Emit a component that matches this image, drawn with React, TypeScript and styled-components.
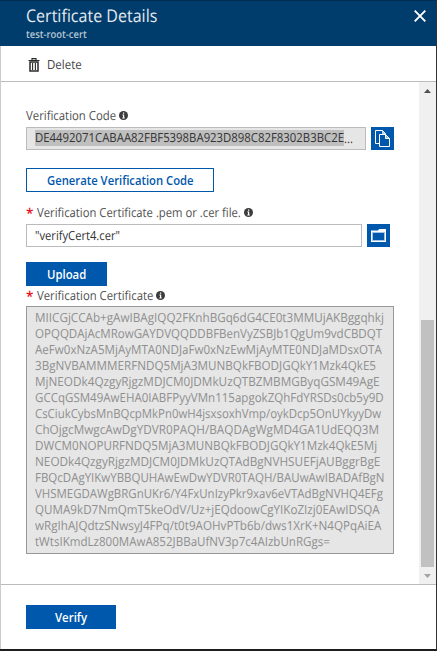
import React, { useLayoutEffect, useRef, useState } from "react";
import styled, { createGlobalStyle, css } from "styled-components";

const blue = "#0058ad";

const GlobalStyle = createGlobalStyle`
  *, *::before, *::after { box-sizing: border-box; }
  html, body { margin: 0; height: 100%; overflow: hidden; }
  body {
    font-family: "Open Sans", "Noto Sans", sans-serif;
    font-size: 12.5px;
    color: #444;
    background: #fff;
    text-rendering: geometricPrecision;
  }
`;

const Blade = styled.div`
  width: 437px;
  height: 651px;
  display: flex;
  flex-direction: column;
  border-right: 1px solid #333;
  border-bottom: 2px solid #1e1e20;
  background: #fff;
`;

const Header = styled.header`
  height: 46px;
  flex: none;
  display: flex;
  justify-content: space-between;
  align-items: flex-start;
  padding: 4px 9px 0 26px;
  border-top: 1px solid #002e53;
  background: #003c6c;
  color: #fff;
`;

const Heading = styled.div`
  display: flex;
  flex-direction: column;
`;

const Title = styled.h1`
  margin: 0;
  height: 23px;
  line-height: 23px;
  font-size: 17.5px;
  font-weight: 400;
  color: #e4eaf0;
`;

const Subtitle = styled.div`
  height: 14px;
  line-height: 14px;
  font-size: 10.5px;
  font-weight: 600;
  color: #b9c6d2;
`;

const CloseButton = styled.button`
  width: 14px;
  height: 14px;
  margin-top: 4px;
  padding: 0;
  border: 0;
  background: none;
  display: flex;
  align-items: center;
  justify-content: center;
`;

const Body = styled.div`
  flex: 1;
  min-height: 0;
  display: flex;
  flex-direction: column;
  border-left: 1px solid #ccc;
`;

const Toolbar = styled.div`
  height: 36px;
  flex: none;
  display: flex;
  align-items: center;
  gap: 7px;
  padding: 2px 0 0 27px;
  border-bottom: 1px solid #bbb;
`;

const ScrollArea = styled.div`
  flex: 1;
  min-height: 0;
  display: flex;
`;

const Form = styled.main`
  flex: 1;
  display: flex;
  flex-direction: column;
  align-items: flex-start;
  padding: 23px 0 0 25px;
`;

const Label = styled.div<{ $top?: number; $bottom: number }>`
  display: flex;
  align-items: center;
  height: 18px;
  margin: ${(p) => p.$top ?? 0}px 0 ${(p) => p.$bottom}px;
  color: #505050;
`;

const Star = styled.span`
  width: 11px;
  height: 18px;
  line-height: 20px;
  font-size: 13.5px;
  font-weight: 600;
  color: #e81123;
`;

const InfoSlot = styled.span`
  display: flex;
  margin-left: 3px;
`;

const FieldRow = styled.div`
  display: flex;
  gap: 5px;
  height: 23px;
`;

const Field = styled.div<{ $width: number; $readOnly?: boolean }>`
  width: ${(p) => p.$width}px;
  height: 23px;
  display: flex;
  align-items: center;
  padding-left: 8px;
  border: 1px solid #bbb;
  color: #333;
  background: ${(p) => (p.$readOnly ? "#e6e6e6" : "#fff")};
`;

const Selected = styled.span`
  height: 16px;
  line-height: 16px;
  margin-bottom: 1px;
  background: #bfbfbf;
`;

const IconButton = styled.button`
  width: 23px;
  height: 23px;
  padding: 0;
  border: 0;
  display: flex;
  align-items: center;
  justify-content: center;
  background: ${blue};
`;

const Button = styled.button<{ $width: number; $top?: number; $outline?: boolean }>`
  width: ${(p) => p.$width}px;
  height: 24px;
  margin-top: ${(p) => p.$top ?? 0}px;
  padding: 0;
  display: flex;
  align-items: center;
  justify-content: center;
  font: inherit;
  border: 1px solid ${blue};
  ${(p) =>
    p.$outline
      ? css`
          background: #fff;
          color: ${blue};
          font-weight: 600;
        `
      : css`
          background: ${blue};
          color: #fff;
          font-weight: 600;
        `}
`;

const CertificateBox = styled.div`
  width: 368px;
  height: 248px;
  padding: 3px 0 0 8px;
  border: 1px solid #999;
  background: #e6e6e6;
  color: #8e8e8e;
`;

const CertificateLine = styled.div`
  height: 16px;
  line-height: 16px;
`;

const Scrollbar = styled.div`
  width: 17px;
  display: flex;
  flex-direction: column;
  align-items: center;
  background: #f0f0f0;
`;

const ScrollArrow = styled.div`
  height: 17px;
  flex: none;
  display: flex;
  align-items: center;
`;

const ScrollTrack = styled.div`
  flex: 1;
  display: flex;
  align-items: flex-end;
`;

const ScrollThumb = styled.div`
  width: 13px;
  height: 247px;
  background: #c1c1c1;
`;

const Footer = styled.footer`
  height: 65px;
  flex: none;
  padding: 20px 0 0 25px;
  border-top: 1px solid #bbb;
`;

const FitBox = styled.span<{ $width: number }>`
  display: inline-block;
  width: ${(p) => p.$width}px;
  white-space: pre;
`;

const FitText = styled.span`
  display: inline-block;
  transform-origin: 0 50%;
`;

/* Condenses its text so that the run takes up exactly the given width. */
function Fit({ children, width }: { children: string; width: number }) {
  const ref = useRef<HTMLSpanElement>(null);
  const [scale, setScale] = useState(1);
  useLayoutEffect(() => {
    if (ref.current) setScale(width / ref.current.offsetWidth);
  }, [children, width]);
  return (
    <FitBox $width={width}>
      <FitText ref={ref} style={{ transform: `scaleX(${scale})` }}>
        {children}
      </FitText>
    </FitBox>
  );
}

const InfoIcon = () => (
  <InfoSlot>
    <svg width="9" height="9" viewBox="0 0 9 9">
      <circle cx="4.5" cy="4.5" r="4.5" fill="#3c3c3c" />
      <path d="M4 1.5h1.2v1.2H4zM3.4 3.6h1.8v3h.6v.8H3.3v-.8H4V4.4h-.6z" fill="#fff" />
    </svg>
  </InfoSlot>
);

const TrashIcon = () => (
  <svg width="12" height="14" viewBox="0 0 12 14" fill="none" stroke="#2b2b2b">
    <path d="M.5 2.5h11M4 2V.7h4V2" strokeWidth="1.2" />
    <path d="M2 4v9h8V4z" strokeWidth="1.5" />
    <path d="M4.6 5v7M7.4 5v7" strokeWidth="1.1" />
  </svg>
);

const CloseIcon = () => (
  <svg width="12" height="12" viewBox="0 0 12 12">
    <path d="M.7.7l10.6 10.6M11.3.7L.7 11.3" stroke="#fff" strokeWidth="1.9" />
  </svg>
);

const CopyIcon = () => (
  <svg width="17" height="17" viewBox="0 0 17 17" fill="none">
    <path d="M5.5 13.5h-4v-13h7l3 3" stroke="#fff" />
    <path d="M8.5 .5v3h3z" fill="#9fc3e4" stroke="#fff" strokeWidth=".7" />
    <path d="M5.5 4.5h6l4 4v8h-10z" fill={blue} stroke="#fff" />
    <path d="M11.5 4.5v4h4z" fill="#9fc3e4" stroke="#fff" />
  </svg>
);

const FolderIcon = () => (
  <svg width="15" height="13" viewBox="0 0 15 13">
    <path d="M0 1.5h7L8.2 0H15v13H0z" fill="#fff" />
    <path d="M1.5 3.5h12v8h-12z" fill={blue} stroke="#9fc3e4" />
  </svg>
);

const Arrow = ({ down }: { down?: boolean }) => (
  <svg width="7" height="4" viewBox="0 0 7 4">
    <path d={down ? "M0 0h7L3.5 4z" : "M0 4h7L3.5 0z"} fill={down ? "#a3a3a3" : "#505050"} />
  </svg>
);

const certificate: [string, number][] = [
  ["MIICGjCCAb+gAwIBAgIQQ2FKnhBGq6dG4CE0t3MMUjAKBggqhkj", 348.5],
  ["OPQQDAjAcMRowGAYDVQQDDBFBenVyZSBJb1QgUm9vdCBDQT", 347],
  ["AeFw0xNzA5MjAyMTA0NDJaFw0xNzEwMjAyMTE0NDJaMDsxOTA", 346.5],
  ["3BgNVBAMMMERFNDQ5MjA3MUNBQkFBODJGQkY1Mzk4QkE5", 341],
  ["MjNEODk4QzgyRjgzMDJCM0JDMkUzQTBZMBMGByqGSM49AgE", 344.5],
  ["GCCqGSM49AwEHA0IABFPyyVMn115apgokZQhFdYRSDs0cb5y9D", 349],
  ["CsCiukCybsMnBQcpMkPn0wH4jsxsoxhVmp/oykDcp5OnUYkyyDw", 346.5],
  ["ChOjgcMwgcAwDgYDVR0PAQH/BAQDAgWgMD4GA1UdEQQ3M", 344.5],
  ["DWCM0NOPURFNDQ5MjA3MUNBQkFBODJGQkY1Mzk4QkE5Mj", 342.5],
  ["NEODk4QzgyRjgzMDJCM0JDMkUzQTAdBgNVHSUEFjAUBggrBgE", 345],
  ["FBQcDAgYIKwYBBQUHAwEwDwYDVR0TAQH/BAUwAwIBADAfBgN", 349.5],
  ["VHSMEGDAWgBRGnUKr6/Y4FxUnIzyPkr9xav6eVTAdBgNVHQ4EFg", 348],
  ["QUMA9kD7NmQmT5keOdV/Uz+jEQdoowCgYIKoZIzj0EAwIDSQA", 344.5],
  ["wRgIhAJQdtzSNwsyJ4FPq/t0t9AOHvPTb6b/dws1XrK+N4QPqAiEA", 346.5],
  ["tWtsIKmdLz800MAwA852JBBaUfNV3p7c4AIzbUnRGgs=", 295],
];

export default function App() {
  return (
    <>
      <GlobalStyle />
      <Blade>
        <Header>
          <Heading>
            <Title><Fit width={131}>Certificate Details</Fit></Title>
            <Subtitle><Fit width={61}>test-root-cert</Fit></Subtitle>
          </Heading>
          <CloseButton aria-label="Close"><CloseIcon /></CloseButton>
        </Header>
        <Body>
          <Toolbar>
            <TrashIcon />
            <Fit width={35}>Delete</Fit>
          </Toolbar>
          <ScrollArea>
            <Form>
              <Label $top={1} $bottom={3}>
                <Fit width={90}>Verification Code</Fit>
                <InfoIcon />
              </Label>
              <FieldRow>
                <Field $width={340} $readOnly>
                  <Selected><Fit width={309}>DE4492071CABAA82FBF5398BA923D898C82F8302B3BC2E</Fit></Selected>
                  <Fit width={9}>...</Fit>
                </Field>
                <IconButton aria-label="Copy"><CopyIcon /></IconButton>
              </FieldRow>
              <Button $width={188} $top={18} $outline>
                <Fit width={147}>Generate Verification Code</Fit>
              </Button>
              <Label $top={11} $bottom={3}>
                <Star>*</Star>
                <Fit width={204}>Verification Certificate .pem or .cer file.</Fit>
                <InfoIcon />
              </Label>
              <FieldRow>
                <Field $width={336}><Fit width={85}>"verifyCert4.cer"</Fit></Field>
                <IconButton aria-label="Browse"><FolderIcon /></IconButton>
              </FieldRow>
              <Button $width={81} $top={15}><Fit width={39}>Upload</Fit></Button>
              <Label $bottom={2}>
                <Star>*</Star>
                <Fit width={116}>Verification Certificate</Fit>
                <InfoIcon />
              </Label>
              <CertificateBox>
                {certificate.map(([text, width]) => (
                  <CertificateLine key={text}><Fit width={width}>{text}</Fit></CertificateLine>
                ))}
              </CertificateBox>
            </Form>
            <Scrollbar>
              <ScrollArrow><Arrow /></ScrollArrow>
              <ScrollTrack><ScrollThumb /></ScrollTrack>
              <ScrollArrow><Arrow down /></ScrollArrow>
            </Scrollbar>
          </ScrollArea>
          <Footer>
            <Button $width={90}><Fit width={32}>Verify</Fit></Button>
          </Footer>
        </Body>
      </Blade>
    </>
  );
}
